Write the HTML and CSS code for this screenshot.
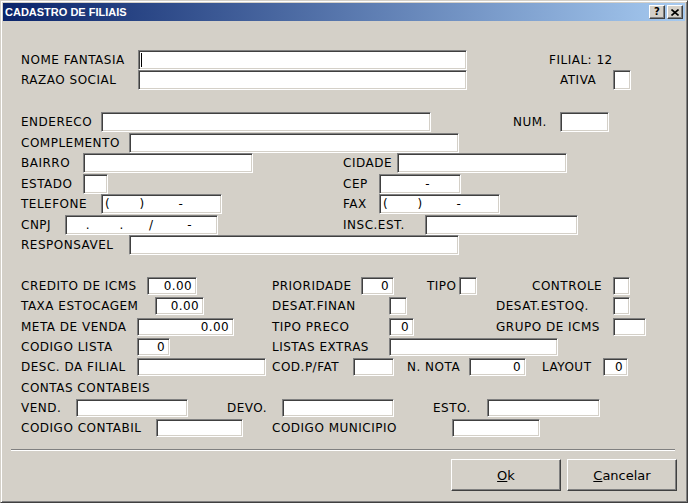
FILE: index.html
```html
<!DOCTYPE html>
<html lang="pt">
<head>
    <meta charset="UTF-8">
    <title>Cadastro de Filiais</title>
    <link rel="stylesheet" href="styles.css">
</head>
<body>
    <div class="window">
        <div class="titlebar">
            <span class="title">CADASTRO DE FILIAIS</span>
            <div class="caption-buttons">
                <span class="cap-btn help">?</span>
                <span class="cap-btn">
                    <svg width="8" height="7" viewBox="0 0 8 7"><path d="M0.5 0.5 L7.5 6.5 M7.5 0.5 L0.5 6.5" stroke="#000" stroke-width="1.6"/></svg>
                </span>
            </div>
        </div>

        <form class="form">
            <!-- identificacao -->
            <div class="group group-top">
                <div class="row">
                    <label class="field f-nome"><span>NOME FANTASIA</span><input type="text" class="caret"></label>
                    <span class="field f-filial"><span>FILIAL: 12</span></span>
                </div>
                <div class="row">
                    <label class="field f-razao"><span>RAZAO SOCIAL</span><input type="text"></label>
                    <label class="field f-ativa"><span>ATIVA</span><input type="text"></label>
                </div>
            </div>

            <!-- endereco -->
            <div class="group group-mid">
                <div class="row">
                    <label class="field f-endereco"><span>ENDERECO</span><input type="text"></label>
                    <label class="field f-num"><span>NUM.</span><input type="text"></label>
                </div>
                <div class="row">
                    <label class="field f-complemento"><span>COMPLEMENTO</span><input type="text"></label>
                </div>
                <div class="row">
                    <label class="field f-bairro"><span>BAIRRO</span><input type="text"></label>
                    <label class="field f-cidade"><span>CIDADE</span><input type="text"></label>
                </div>
                <div class="row">
                    <label class="field f-estado"><span>ESTADO</span><input type="text"></label>
                    <label class="field f-cep"><span>CEP</span><input type="text" value="          -"></label>
                </div>
                <div class="row">
                    <label class="field f-telefone"><span>TELEFONE</span><input type="text" value="(       )        -"></label>
                    <label class="field f-fax"><span>FAX</span><input type="text" value="(       )        -"></label>
                </div>
                <div class="row">
                    <label class="field f-cnpj"><span>CNPJ</span><input type="text" value="    .       .      /        -"></label>
                    <label class="field f-insc"><span>INSC.EST.</span><input type="text"></label>
                </div>
                <div class="row">
                    <label class="field f-responsavel"><span>RESPONSAVEL</span><input type="text"></label>
                </div>
            </div>

            <!-- parametros -->
            <div class="group group-low">
                <div class="row">
                    <label class="field f-credito"><span>CREDITO DE ICMS</span><input type="text" class="num" value="0.00"></label>
                    <label class="field f-prioridade"><span>PRIORIDADE</span><input type="text" class="num" value="0"></label>
                    <label class="field f-tipo"><span>TIPO</span><input type="text"></label>
                    <label class="field f-controle"><span>CONTROLE</span><input type="text"></label>
                </div>
                <div class="row">
                    <label class="field f-taxa"><span>TAXA ESTOCAGEM</span><input type="text" class="num" value="0.00"></label>
                    <label class="field f-desatfin"><span>DESAT.FINAN</span><input type="text"></label>
                    <label class="field f-desatest"><span>DESAT.ESTOQ.</span><input type="text"></label>
                </div>
                <div class="row">
                    <label class="field f-meta"><span>META DE VENDA</span><input type="text" class="num" value="0.00"></label>
                    <label class="field f-tipopreco"><span>TIPO PRECO</span><input type="text" class="num" value="0"></label>
                    <label class="field f-grupo"><span>GRUPO DE ICMS</span><input type="text"></label>
                </div>
                <div class="row">
                    <label class="field f-codlista"><span>CODIGO LISTA</span><input type="text" class="num" value="0"></label>
                    <label class="field f-listas"><span>LISTAS EXTRAS</span><input type="text"></label>
                </div>
                <div class="row">
                    <label class="field f-desc"><span>DESC. DA FILIAL</span><input type="text"></label>
                    <label class="field f-codfat"><span>COD.P/FAT</span><input type="text"></label>
                    <label class="field f-nnota"><span>N. NOTA</span><input type="text" class="num" value="0"></label>
                    <label class="field f-layout"><span>LAYOUT</span><input type="text" class="num" value="0"></label>
                </div>
                <div class="row">
                    <span class="field"><span>CONTAS CONTABEIS</span></span>
                </div>
                <div class="row">
                    <label class="field f-vend"><span>VEND.</span><input type="text"></label>
                    <label class="field f-devo"><span>DEVO.</span><input type="text"></label>
                    <label class="field f-esto"><span>ESTO.</span><input type="text"></label>
                </div>
                <div class="row">
                    <label class="field f-codcont"><span>CODIGO CONTABIL</span><input type="text"></label>
                    <label class="field f-codmun"><span>CODIGO MUNICIPIO</span><input type="text"></label>
                </div>
            </div>

            <div class="separator"></div>

            <div class="actions">
                <button type="submit" class="btn"><u>O</u>k</button>
                <button type="button" class="btn"><u>C</u>ancelar</button>
            </div>
        </form>
    </div>
</body>
</html>
```

FILE: styles.css
```css
* {
    box-sizing: border-box;
    margin: 0;
    padding: 0;
}

body {
    background-color: #D4D0C8;
    font-family: "DejaVu Sans", Verdana, sans-serif;
    font-size: 12px;
    color: #000;
}

.window {
    width: 688px;
    height: 503px;
    padding: 2px;
    background-color: #D4D0C8;
    border: 1px solid;
    border-color: #D4D0C8 #404040 #404040 #D4D0C8;
    box-shadow: inset 1px 1px #fff, inset -1px -1px #808080;
}

/* title bar */
.titlebar {
    height: 18px;
    display: flex;
    justify-content: space-between;
    align-items: flex-start;
    padding: 2px 2px 0 2px;
    background: linear-gradient(to right, #0A246A, #A6CAF0);
}

.title {
    font-family: "Liberation Sans", Arial, sans-serif;
    font-size: 11px;
    font-weight: bold;
    color: #fff;
    line-height: 14px;
}

.caption-buttons {
    display: flex;
    gap: 2px;
}

.cap-btn {
    width: 16px;
    height: 14px;
    display: flex;
    align-items: center;
    justify-content: center;
    background-color: #D4D0C8;
    border: 1px solid;
    border-color: #fff #404040 #404040 #fff;
    box-shadow: inset -1px -1px #808080;
}

.cap-btn.help {
    font-family: "DejaVu Sans", sans-serif;
    font-size: 10px;
    font-weight: bold;
    line-height: 12px;
    padding-bottom: 1px;
}

/* form */
.form {
    padding: 29px 0 0 18px;
}

.group-mid {
    margin-top: 22px;
}

.group-low {
    margin-top: 20.5px;
}

.row {
    display: flex;
    align-items: center;
    height: 20px;
}

.group-mid .row {
    height: 20.5px;
}

.group-low .row {
    height: 20.3px;
}

.field {
    display: flex;
    align-items: center;
    flex-shrink: 0;
    margin-left: var(--ml, 0);
}

.field > span {
    width: var(--lw, auto);
    white-space: nowrap;
    letter-spacing: 0.5px;
}

.field > input {
    width: var(--iw);
    height: 20px;
    padding: 0 3px;
    font-family: inherit;
    font-size: 12px;
    letter-spacing: 0.4px;
    color: #000;
    background-color: #fff;
    border: 1px solid;
    border-color: #808080 #fff #fff #808080;
    box-shadow: inset 1px 1px #404040, inset -1px -1px #D4D0C8;
    outline: none;
}

.group-low .field > input {
    height: 18px;
}

.field > input.num {
    text-align: right;
    padding-right: 4px;
}

.field > input.caret {
    background: linear-gradient(#000, #000) 2px 2px / 1px 14px no-repeat, #fff;
}

/* field positions */
.f-nome        { --lw: 117px; --iw: 329px; }
.f-filial      { --ml: 82px; }
.f-razao       { --lw: 117px; --iw: 329px; }
.f-ativa       { --ml: 93px; --lw: 53px; --iw: 18px; }

.f-endereco    { --lw: 80px; --iw: 330px; }
.f-num         { --ml: 82px; --lw: 47px; --iw: 49px; }
.f-complemento { --lw: 108px; --iw: 330px; }
.f-bairro      { --lw: 62px; --iw: 170px; }
.f-cidade      { --ml: 90px; --lw: 54px; --iw: 170px; }
.f-estado      { --lw: 62px; --iw: 25px; }
.f-cep         { --ml: 235px; --lw: 36px; --iw: 82px; }
.f-telefone    { --lw: 80px; --iw: 121px; }
.f-fax         { --ml: 121px; --lw: 36px; --iw: 121px; }
.f-cnpj        { --lw: 44px; --iw: 153px; }
.f-insc        { --ml: 125px; --lw: 82px; --iw: 153px; }
.f-responsavel { --lw: 108px; --iw: 330px; }

.f-credito     { --lw: 126px; --iw: 50px; }
.f-prioridade  { --ml: 75px; --lw: 89px; --iw: 33px; }
.f-tipo        { --ml: 33px; --lw: 32px; --iw: 18px; }
.f-controle    { --ml: 55px; --lw: 81px; --iw: 17px; }
.f-taxa        { --lw: 134px; --iw: 49px; }
.f-desatfin    { --ml: 68px; --lw: 117px; --iw: 18px; }
.f-desatest    { --ml: 89px; --lw: 117px; --iw: 17px; }
.f-meta        { --lw: 116px; --iw: 97px; }
.f-tipopreco   { --ml: 38px; --lw: 117px; --iw: 25px; }
.f-grupo       { --ml: 82px; --lw: 117px; --iw: 33px; }
.f-codlista    { --lw: 116px; --iw: 33px; }
.f-listas      { --ml: 102px; --lw: 117px; --iw: 169px; }
.f-desc        { --lw: 116px; --iw: 129px; }
.f-codfat      { --ml: 6px; --lw: 81px; --iw: 41px; }
.f-nnota       { --ml: 13px; --lw: 62px; --iw: 57px; }
.f-layout      { --ml: 16px; --lw: 61px; --iw: 25px; }
.f-vend        { --lw: 55px; --iw: 112px; }
.f-devo        { --ml: 39px; --lw: 55px; --iw: 112px; }
.f-esto        { --ml: 39px; --lw: 54px; --iw: 113px; }
.f-codcont     { --lw: 135px; --iw: 87px; }
.f-codmun      { --ml: 29px; --lw: 180px; --iw: 88px; }

/* bottom */
.separator {
    margin: 11px 0 0 -10px;
    width: 664px;
    border-top: 1px solid #808080;
    border-bottom: 1px solid #fff;
}

.actions {
    display: flex;
    justify-content: flex-end;
    gap: 6px;
    margin: 8px 8px 0 0;
}

.btn {
    width: 110px;
    height: 32px;
    font-family: "DejaVu Sans", Verdana, sans-serif;
    font-size: 13px;
    color: #000;
    background-color: #D4D0C8;
    border: 1px solid;
    border-color: #fff #404040 #404040 #fff;
    box-shadow: inset -1px -1px #808080;
}
```
